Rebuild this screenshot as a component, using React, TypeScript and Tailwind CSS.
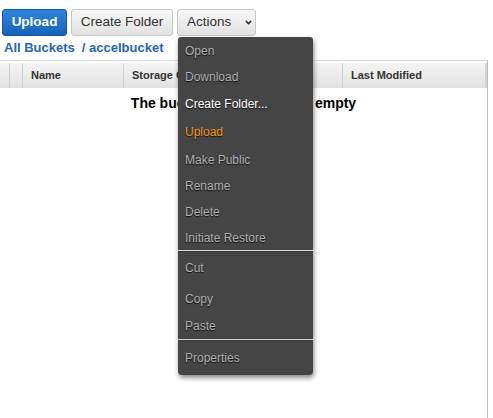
import { ChevronDown } from 'lucide-react'

type Item = { label: string; h: string; tone: 'off' | 'on' | 'hot' }

const topItems: Item[] = [
  { label: 'Open', h: 'h-[27px]', tone: 'off' },
  { label: 'Download', h: 'h-[26px]', tone: 'off' },
  { label: 'Create Folder...', h: 'h-[28px]', tone: 'on' },
  { label: 'Upload', h: 'h-[28px]', tone: 'hot' },
  { label: 'Make Public', h: 'h-[27px]', tone: 'off' },
  { label: 'Rename', h: 'h-[26px]', tone: 'off' },
  { label: 'Delete', h: 'h-[26px]', tone: 'off' },
  { label: 'Initiate Restore', h: 'h-[25px]', tone: 'off' },
]

const midItems: Item[] = [
  { label: 'Cut', h: 'h-[32px]', tone: 'off' },
  { label: 'Copy', h: 'h-[29px]', tone: 'off' },
  { label: 'Paste', h: 'h-[26px]', tone: 'off' },
]

function MenuItem({ item }: { item: Item }) {
  const color =
    item.tone === 'on' ? 'text-white' : item.tone === 'hot' ? 'text-[#f7931e]' : 'text-[#b0b0b0]'
  return (
    <div className={`${item.h} flex items-center pl-[7px] text-[12px] ${color} [text-shadow:0_1px_1px_#111]`}>
      {item.label}
    </div>
  )
}

function Separator() {
  return <div className="h-[2px] border-t border-[#d6d6d6] bg-[#3a3a3a]" />
}

export default function App() {
  return (
    <div className="relative w-[493px] h-[418px] overflow-hidden bg-white font-['Liberation_Sans',Arial,sans-serif]">
      {/* toolbar */}
      <div className="flex gap-[4px] pl-[2px] pt-[9px]">
        <button className="h-[27px] w-[65px] rounded-[3px] border border-[#1558a6] bg-gradient-to-b from-[#2f86dc] to-[#1862b8] text-[13.5px] font-bold text-white">
          Upload
        </button>
        <button className="h-[27px] w-[102px] rounded-[3px] border border-[#c8c8c8] bg-gradient-to-b from-[#f8f8f8] to-[#e1e1e1] text-[13.5px] text-[#333]">
          Create Folder
        </button>
        <button className="flex h-[27px] w-[79px] items-center rounded-[3px] border border-[#c8c8c8] bg-gradient-to-b from-[#f8f8f8] to-[#e1e1e1] pl-[9px] text-[13.5px] text-[#333]">
          Actions
          <ChevronDown className="ml-[13px] h-[9px] w-[9px]" strokeWidth={4} />
        </button>
      </div>

      {/* breadcrumb */}
      <div className="flex h-[24px] items-center pl-[4px] text-[13px] font-bold text-[#2566b8]">
        <span>All Buckets</span>
        <span className="ml-[7px]">/ accelbucket</span>
      </div>

      {/* table */}
      <div className="mr-[5px] h-[360px] border-t border-r border-[#d9d9d9] border-r-[#bdbdbd] pt-[2px]">
        <div className="flex h-[25px] bg-gradient-to-b from-[#f4f4f4] to-[#e2e2e2] text-[11px] font-bold text-[#333]">
          <div className="w-[10px] border-r border-[#d0d0d0]" />
          <div className="w-[13px] border-r border-[#d0d0d0]" />
          <div className="flex w-[101px] items-center border-r border-[#d0d0d0] pl-[8px]">Name</div>
          <div className="flex w-[219px] items-center border-r border-[#d0d0d0] pl-[8px]">Storage Class</div>
          <div className="flex flex-1 items-center pl-[8px]">Last Modified</div>
          <div className="w-[2px] bg-[#d4d4d4]" />
        </div>
        <div className="pt-[5px] text-center text-[14px] font-bold text-black">
          The bucket 'accelbucket' is empty
        </div>
      </div>

      {/* actions menu */}
      <div className="absolute left-[178px] top-[37px] w-[135px] rounded-b-[4px] rounded-t-[3px] bg-[#454545] shadow-[1px_3px_5px_rgba(0,0,0,0.45)]">
        {topItems.map((it) => (
          <MenuItem key={it.label} item={it} />
        ))}
        <Separator />
        {midItems.map((it) => (
          <MenuItem key={it.label} item={it} />
        ))}
        <Separator />
        <div className="flex h-[34px] items-center pl-[7px] text-[12px] text-[#b0b0b0] [text-shadow:0_1px_1px_#111]">
          Properties
        </div>
      </div>
    </div>
  )
}
